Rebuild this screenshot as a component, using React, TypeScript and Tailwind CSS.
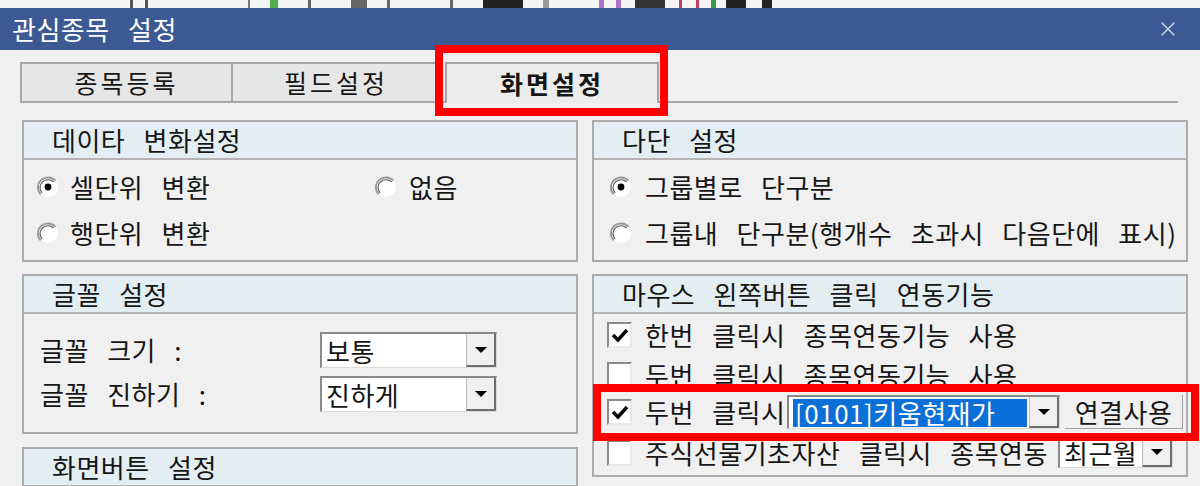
import React from 'react';
import { X } from 'lucide-react';

const Radio: React.FC<{ checked?: boolean }> = ({ checked }) => (
  <svg width="22" height="22" viewBox="0 0 22 22" className="shrink-0">
    <circle cx="11" cy="11" r="10" fill="#ffffff" />
    <path d="M18.4 4.6 A10 10 0 0 0 3.6 18.4" stroke="#9a9a9a" strokeWidth="2" fill="none" />
    <path d="M16.6 6 A8 8 0 0 0 5 17" stroke="#5a5a5a" strokeWidth="1.2" fill="none" />
    {checked && <circle cx="11" cy="11" r="3.4" fill="#000000" />}
  </svg>
);

const Check: React.FC<{ checked?: boolean }> = ({ checked }) => (
  <div className="w-[25px] h-[26px] shrink-0 bg-white border-t-2 border-l-2 border-[#8a8a8a] border-r-2 border-b-2 border-r-[#e8e8e8] border-b-[#e8e8e8] flex items-center justify-center">
    {checked && (
      <svg width="18" height="16" viewBox="0 0 18 16">
        <path d="M2 8 L7 13 L16 3" stroke="#000" strokeWidth="3.4" fill="none" />
      </svg>
    )}
  </div>
);

const Arrow: React.FC = () => (
  <div className="w-[30px] h-full shrink-0 bg-[#f0f0f0] border-l border-[#bdbdbd] border-r-2 border-b-2 border-r-[#6e6e6e] border-b-[#6e6e6e] flex items-center justify-center">
    <svg width="14" height="8" viewBox="0 0 14 8">
      <path d="M1 1 L13 1 L7 7 Z" fill="#000" />
    </svg>
  </div>
);

const Combo: React.FC<{ value: string; w: string; selected?: boolean }> = ({ value, w, selected }) => (
  <div className={`${w} h-full flex bg-white border-t-2 border-l-2 border-[#8a8a8a] border-r border-b border-r-[#dcdcdc] border-b-[#dcdcdc]`}>
    <div className="flex-1 flex items-center pl-[4px] pr-[2px] min-w-0">
      <span className={selected ? 'bg-[#0a6fd6] text-white w-full px-[2px] h-[28px] flex items-center whitespace-nowrap' : 'whitespace-nowrap'}>
        {value}
      </span>
    </div>
    <Arrow />
  </div>
);

const Panel: React.FC<{ title: string; h: string; children?: React.ReactNode }> = ({ title, h, children }) => (
  <div className={`border-2 border-[#ababab] bg-[#f0f0f0] ${h} overflow-hidden`}>
    <div className="h-[38px] bg-[#e3eef3] border-b-2 border-[#b4b4b4] pl-[28px] flex items-center">{title}</div>
    {children}
  </div>
);

export default function App() {
  return (
    <div className="w-[1200px] h-[486px] overflow-hidden relative bg-[#f0f0f0] text-[26px] leading-none tracking-[0.5px] [word-spacing:12px] text-[#161616] font-['Noto_Sans_CJK_KR',sans-serif]">
      {/* taskbar remnants */}
      <div className="h-[8px] bg-[#f4f4f4] flex items-stretch">
        <div className="w-[130px]" />
        <div className="w-[3px] bg-[#555]" />
        <div className="w-[12px]" />
        <div className="w-[3px] bg-[#555]" />
        <div className="w-[100px]" />
        <div className="w-[2px] bg-[#777]" />
        <div className="w-[20px]" />
        <div className="w-[8px] bg-[#4cb04c]" />
        <div className="w-[30px]" />
        <div className="w-[3px] bg-[#666]" />
        <div className="w-[16px] bg-[#666] ml-[40px]" />
        <div className="w-[3px] bg-[#666] ml-[20px]" />
        <div className="w-[60px]" />
        <div className="w-[3px] bg-[#666]" />
        <div className="w-[40px] bg-[#222] ml-[30px]" />
        <div className="w-[6px] bg-[#999] ml-[20px]" />
        <div className="w-[5px] bg-[#b070c8] ml-[50px]" />
        <div className="w-[5px] bg-[#b070c8] ml-[12px]" />
        <div className="w-[30px] bg-[#333] ml-[14px]" />
        <div className="w-[3px] bg-[#c04060] ml-[14px]" />
        <div className="w-[3px] bg-[#c04060] ml-[14px]" />
        <div className="w-[5px] bg-[#3a9a4a] ml-[12px]" />
        <div className="w-[20px] bg-[#222] ml-[10px]" />
        <div className="w-[10px] bg-[#222] ml-[16px]" />
      </div>

      {/* title bar */}
      <div className="h-[42px] bg-[#3c5994] flex items-center justify-between pl-[12px] pr-[20px] text-white">
        <span>관심종목 설정</span>
        <X className="w-[24px] h-[24px] text-[#c9d2e4]" strokeWidth={1.5} />
      </div>

      {/* tabs */}
      <div className="pt-[12px] px-[20px] flex items-end text-[25px] tracking-[3px]">
        <div className="w-[213px] h-[41px] bg-[#e6e6e6] border-2 border-[#a6a6a6] flex items-center justify-center">종목등록</div>
        <div className="w-[208px] h-[41px] bg-[#e6e6e6] border-2 border-l-0 border-[#a6a6a6] flex items-center justify-center">필드설정</div>
        <div className="w-[4px] h-[41px] border-b-2 border-[#a6a6a6]" />
        <div className="w-[214px] h-[41px] bg-[#ececec] border-2 border-b-0 border-[#a6a6a6] flex items-center justify-center font-bold">화면설정</div>
        <div className="flex-1 h-[41px] border-b-2 border-[#a6a6a6] mr-[2px]" />
      </div>

      {/* panels */}
      <div className="pt-[17px] pl-[22px] flex gap-[14px]">
        <div className="w-[556px] flex flex-col">
          <Panel title="데이타 변화설정" h="h-[142px]">
            <div className="pt-[4px] pl-[13px]">
              <div className="h-[46px] flex items-center">
                <div className="w-[338px] flex items-center gap-[11px]">
                  <Radio checked />
                  <span>셀단위 변환</span>
                </div>
                <div className="flex items-center gap-[12px]">
                  <Radio />
                  <span>없음</span>
                </div>
              </div>
              <div className="h-[46px] flex items-center gap-[11px]">
                <Radio />
                <span>행단위 변환</span>
              </div>
            </div>
          </Panel>

          <div className="mt-[12px]">
            <Panel title="글꼴 설정" h="h-[160px]">
              <div className="pt-[18px] pl-[16px] flex flex-col gap-[8px]">
                <div className="h-[36px] flex items-center">
                  <span className="w-[280px] whitespace-nowrap">글꼴 크기 :</span>
                  <Combo value="보통" w="w-[177px]" />
                </div>
                <div className="h-[36px] flex items-center">
                  <span className="w-[280px] whitespace-nowrap">글꼴 진하기 :</span>
                  <Combo value="진하게" w="w-[177px]" />
                </div>
              </div>
            </Panel>
          </div>

          <div className="mt-[13px]">
            <Panel title="화면버튼 설정" h="h-[80px]" />
          </div>
        </div>

        <div className="w-[596px] flex flex-col">
          <Panel title="다단 설정" h="h-[142px]">
            <div className="pt-[4px] pl-[16px]">
              <div className="h-[46px] flex items-center gap-[13px]">
                <Radio checked />
                <span>그룹별로 단구분</span>
              </div>
              <div className="h-[46px] flex items-center gap-[13px]">
                <Radio />
                <span className="whitespace-nowrap">그룹내 단구분(행개수 초과시 다음단에 표시)</span>
              </div>
            </div>
          </Panel>

          <div className="mt-[12px]">
            <Panel title="마우스 왼쪽버튼 클릭 연동기능" h="h-[203px]">
              <div className="pt-[1px] pl-[13px]">
                <div className="h-[40px] flex items-center gap-[13px]">
                  <Check checked />
                  <span>한번 클릭시 종목연동기능 사용</span>
                </div>
                <div className="h-[40px] flex items-center gap-[13px]">
                  <Check />
                  <span>두번 클릭시 종목연동기능 사용</span>
                </div>
                <div className="h-[34px] flex items-center">
                  <Check checked />
                  <span className="ml-[13px] w-[142px] whitespace-nowrap">두번 클릭시</span>
                  <Combo value="[0101]키움현재가" w="w-[273px]" selected />
                  <div className="ml-[5px] w-[118px] h-full flex items-center justify-center border-r border-b border-[#a0a0a0]">연결사용</div>
                </div>
                <div className="mt-[8px] h-[31px] flex items-center">
                  <Check />
                  <span className="ml-[13px] w-[413px] whitespace-nowrap">주식선물기초자산 클릭시 종목연동</span>
                  <Combo value="최근월" w="w-[115px]" />
                </div>
              </div>
            </Panel>
          </div>
        </div>
      </div>

      {/* highlight boxes */}
      <div className="absolute left-[435px] top-[45px] w-[233px] h-[71px] border-[8px] border-[#ff0000]" />
      <div className="absolute left-[593px] top-[384px] w-[606px] h-[57px] border-[8px] border-[#ff0000]" />
    </div>
  );
}
